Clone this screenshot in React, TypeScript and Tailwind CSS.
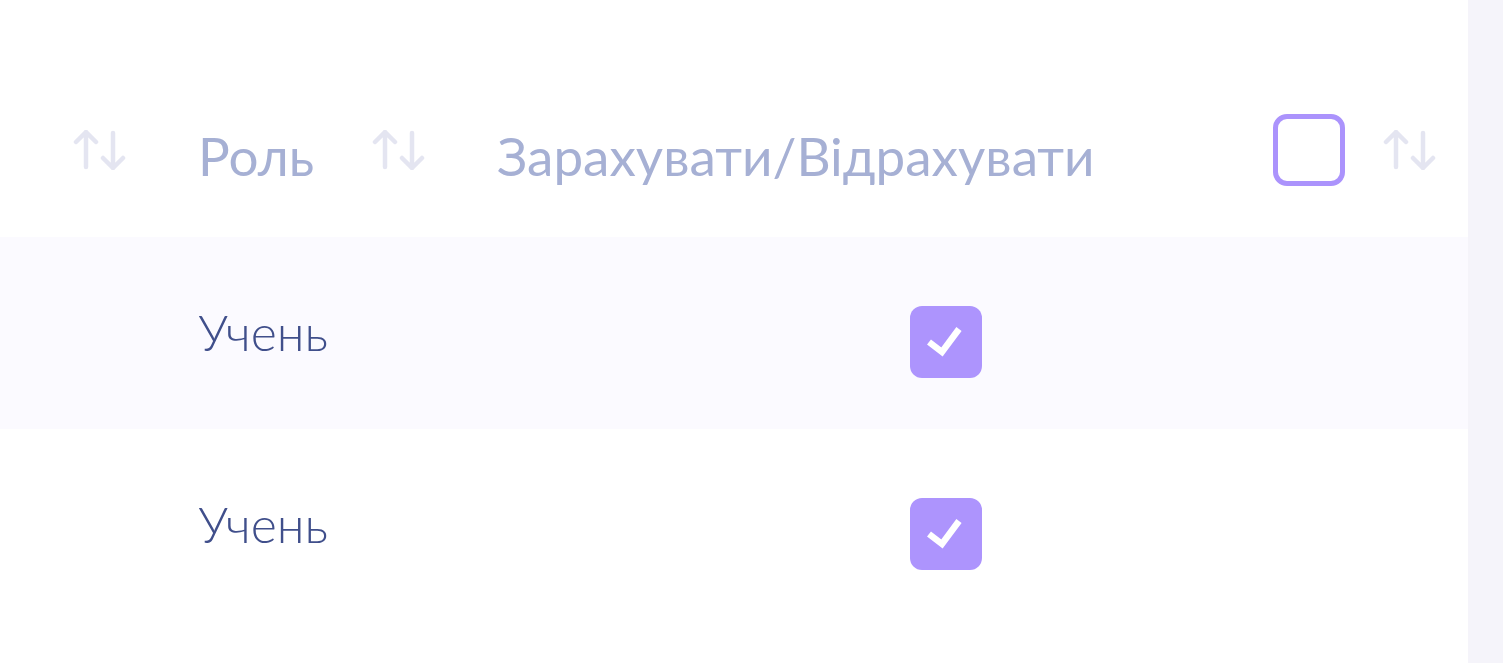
const SortIcon = () => (
  <svg width="54" height="40" viewBox="0 0 54 40" fill="none" stroke="#e4e5f1" strokeWidth="4.5" strokeLinecap="round" strokeLinejoin="round">
    <path d="M13 37V2M3 12L13 2L23 12" />
    <path d="M40 3V38M30 28L40 38L50 28" />
  </svg>
);

const CheckedBox = () => (
  <div className="w-[72px] h-[72px] rounded-[12px] bg-[#ad94fd] flex items-center justify-center">
    <svg width="72" height="72" viewBox="0 0 72 72" fill="none">
      <path d="M19 36L32 46L49 23" stroke="white" strokeWidth="6.5" strokeLinejoin="miter" />
    </svg>
  </div>
);

const rows = ["Учень", "Учень"];

export default function App() {
  return (
    <div className="flex w-[1503px] h-[663px] overflow-hidden bg-[#f5f4fa] font-['Lato','Noto_Sans',sans-serif]">
      <div className="w-[1468px] bg-white flex flex-col">
        <div className="h-[237px] flex items-start pt-[114px]">
          <div className="h-[72px] flex items-center">
            <div className="ml-[73px] w-[125px]">
              <SortIcon />
            </div>
            <div className="w-[174px] text-[53px] leading-none text-[#a6b0d4] pt-[10px]">Роль</div>
            <div className="w-[125px]">
              <SortIcon />
            </div>
            <div className="w-[776px] text-[53px] leading-none text-[#a6b0d4] pt-[10px] whitespace-nowrap">
              Зарахувати/Відрахувати
            </div>
            <div className="w-[110px] h-[72px] flex items-center">
              <div className="w-[72px] h-[72px] rounded-[14px] border-[5px] border-[#ab93fc] bg-white" />
            </div>
            <SortIcon />
          </div>
        </div>
        {rows.map((r, i) => (
          <div key={i} className={`h-[192px] flex items-center ${i % 2 === 0 ? "bg-[#fbfaff]" : "bg-white"}`}>
            <div className="ml-[198px] w-[712px] text-[50px] leading-none font-light text-[#404f8b] pb-[2px]">{r}</div>
            <div className="pt-[18px]">
              <CheckedBox />
            </div>
          </div>
        ))}
        <div className="flex-1 bg-white" />
      </div>
    </div>
  );
}
